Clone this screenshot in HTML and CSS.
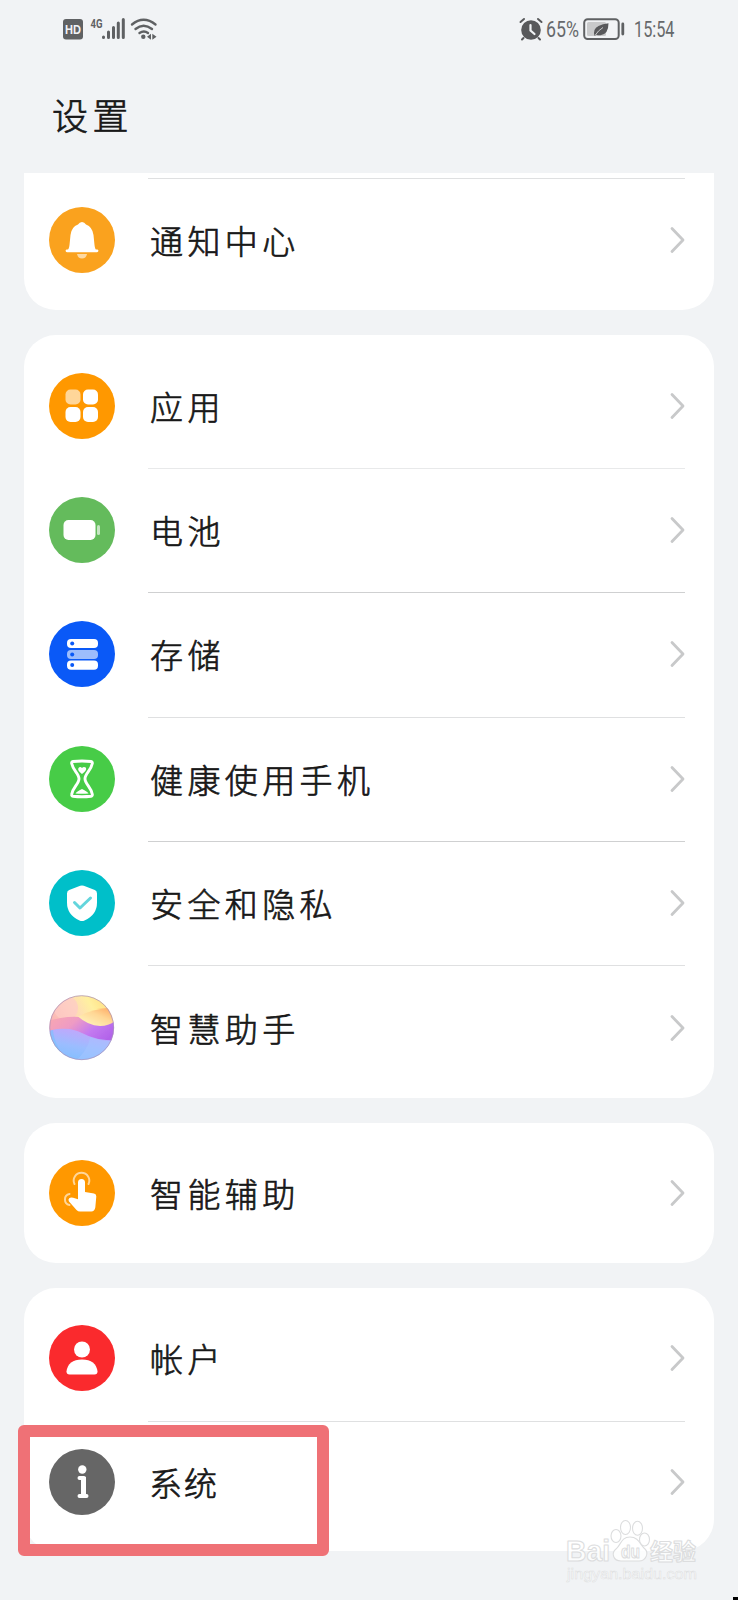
FILE: index.html
```html
<!DOCTYPE html>
<html lang="zh-CN">
<head>
<meta charset="utf-8">
<title>设置</title>
<link rel="stylesheet" href="styles.css">
</head>
<body>
<svg class="defs" aria-hidden="true">
  <symbol id="chev" viewBox="0 0 16 30"><path d="M2 3.500 13 15 2 26.500" fill="none" stroke="#c8c9ca" stroke-width="2.800" stroke-linecap="round" stroke-linejoin="round"/></symbol>
</svg>
<div class="phone">
  <div class="status">
    <svg class="status-left" viewBox="0 -6 100 36">
      <rect x="1" y="1" width="20" height="20.500" rx="3" fill="#5f6163"/>
      <text x="3" y="16" class="hd" textLength="16" lengthAdjust="spacingAndGlyphs">HD</text>
      <text x="28.500" y="9.500" class="g4" textLength="12" lengthAdjust="spacingAndGlyphs">4G</text>
      <path d="M41.500 19.500v-.5M46.500 19.500v-5.500M51.500 19.500v-10M56.300 19.500v-14.500M61.300 19.500v-18" stroke="#5f6163" stroke-width="3" stroke-linecap="round"/>
      <g fill="none" stroke="#5f6163" stroke-width="2.400" stroke-linecap="round"><path d="M70 6.500q11.500-9.500 23.500 0M73.500 11q8-6.500 16.500 0M77.500 15q4.500-3 8.500 0"/></g>
      <circle cx="81.300" cy="18.800" r="2.200" fill="#5f6163"/>
      <path d="M85 18.800l4-3v6zM90.300 15.800v6l4.200-3z" fill="#5f6163"/>
    </svg>
    <svg class="status-right" viewBox="0 -6 190 36">
      <circle cx="12" cy="12" r="9.800" fill="#58595b"/>
      <path d="M1.500 4l3.500-3M22.500 4 19 1M4.500 20l-1.500 1.500M19.500 20l1.500 1.500" stroke="#58595b" stroke-width="2" stroke-linecap="round"/>
      <path d="M11.500 7v5.500l4 3.500" fill="none" stroke="#f1f3f5" stroke-width="2.200" stroke-linecap="round"/>
      <text x="27" y="18.700" class="num" textLength="33" lengthAdjust="spacingAndGlyphs">65%</text>
      <rect x="65.200" y="1.200" width="34.500" height="19.800" rx="3.500" fill="none" stroke="#5f6163" stroke-width="2"/>
      <rect x="68" y="4" width="19" height="14" rx="1.500" fill="#c9cacb"/>
      <path d="M75.500 18q-2-7 4-10 4-2 10-2.800 0 11-8 12-2 .4-4-.4z" fill="#58595b"/>
      <path d="M76 17.500q3-5 8-8" stroke="#c9cacb" stroke-width="1" fill="none"/>
      <path d="M103.800 6v10" stroke="#5f6163" stroke-width="2.800" stroke-linecap="round"/>
      <text x="115" y="18.700" class="num" textLength="40.500" lengthAdjust="spacingAndGlyphs">15:54</text>
    </svg>
  </div>
  <h1 class="title">设置</h1>

  <main class="cards">
    <section class="card card-cut">
      <div class="row row-line"><svg class="icon" viewBox="0 0 66 66"><circle cx="33" cy="33" r="33" fill="#faa21e"/><path d="M17 45q3-2 3.500-7l1-10q.8-8 7.500-10.500 1.500-2.500 4-2.500t4 2.500q6.500 2.500 7.500 10.500l1 10q.5 5 3 7z" fill="#fff"/><path d="M18 43.800h30" stroke="#fff" stroke-width="2.800" stroke-linecap="round"/><path d="M28 47h10q-1 4.500-5 4.500t-5-4.500z" fill="#fdd9a2"/></svg><span class="label">通知中心</span><svg class="chev"><use href="#chev"/></svg></div>
    </section>

    <section class="card">
      <div class="row"><svg class="icon" viewBox="0 0 66 66"><circle cx="33" cy="33" r="33" fill="#ff9800"/><g fill="#fff"><rect x="16.500" y="16.500" width="15" height="15" rx="5" opacity=".6"/><rect x="34" y="16.500" width="15" height="15" rx="5"/><rect x="16.500" y="34" width="15" height="15" rx="5"/><rect x="34" y="34" width="15" height="15" rx="5"/></g></svg><span class="label">应用</span><svg class="chev"><use href="#chev"/></svg></div>
      <div class="row row-line light"><svg class="icon" viewBox="0 0 66 66"><circle cx="33" cy="33" r="33" fill="#64bb5c"/><rect x="14.500" y="23" width="32" height="20" rx="5" fill="#fff"/><rect x="48" y="28" width="3" height="10" rx="1.500" fill="#c5e5c2"/></svg><span class="label">电池</span><svg class="chev"><use href="#chev"/></svg></div>
      <div class="row row-line dark"><svg class="icon" viewBox="0 0 66 66"><circle cx="33" cy="33" r="33" fill="#0a59f7"/><rect x="18" y="18" width="31" height="9" rx="4" fill="#fff"/><rect x="18" y="29" width="31" height="9" rx="4" fill="#9dbdfc"/><rect x="18" y="39.500" width="31" height="9.300" rx="4" fill="#fff"/><g fill="#0a59f7"><circle cx="23.200" cy="22.600" r="2"/><circle cx="23.200" cy="33.400" r="2"/><circle cx="23.200" cy="44.100" r="2"/></g></svg><span class="label">存储</span><svg class="chev"><use href="#chev"/></svg></div>
      <div class="row row-line"><svg class="icon" viewBox="0 0 66 66"><circle cx="33" cy="33" r="33" fill="#47cc47"/><path d="M24 15.500q9-1 18 0c1.200.2 1.500 1 1.300 2-1.200 7-7.300 10-7.300 15.200s6 8.300 7.300 15.500c.2 1-.2 1.800-1.300 2q-9 1-18 0c-1.200-.2-1.500-1-1.300-2 1.200-7.200 7.300-10.300 7.300-15.500s-6-8.200-7.300-15.200c-.2-1 .1-1.800 1.300-2z" fill="none" stroke="#fff" stroke-width="2.900" stroke-linejoin="round"/><path d="M33 28q-5-3.500-3.500-6 1.600-1.800 3.500 0 1.800-2 4-.2 1 3-4 6.200zM26.500 47.500q1-2 6.500-4.500 5.500 2.500 6.500 4.500-6.500.6-13 0z" fill="#fff"/></svg><span class="label">健康使用手机</span><svg class="chev"><use href="#chev"/></svg></div>
      <div class="row row-line dark"><svg class="icon" viewBox="0 0 66 66"><circle cx="33" cy="33" r="33" fill="#00bfc9"/><path d="M31.200 15.800q1.800-.8 3.600 0l11 4.300q2.200.9 2.200 3.300v9q0 12.500-12.500 18-2.500 1-5 0-12.500-5.500-12.500-18v-9q0-2.400 2.200-3.300z" fill="#fff"/><path d="M25.500 32.500l5.500 5.500 10.500-10" fill="none" stroke="#63d5dc" stroke-width="3" stroke-linecap="round" stroke-linejoin="round"/></svg><span class="label">安全和隐私</span><svg class="chev"><use href="#chev"/></svg></div>
      <div class="row row-line"><svg class="icon" viewBox="0 0 66 66">
        <defs>
          <clipPath id="orb"><circle cx="32.700" cy="32.700" r="32.300"/></clipPath>
          <filter id="soft" x="-10%" y="-10%" width="120%" height="120%"><feGaussianBlur stdDeviation=".7"/></filter>
          <linearGradient id="top" x1=".1" y1=".5" x2=".8" y2=".1"><stop offset="0" stop-color="#fab0b4"/><stop offset=".45" stop-color="#fed9b8"/><stop offset=".75" stop-color="#fff0a0"/><stop offset="1" stop-color="#ffe083"/></linearGradient>
          <linearGradient id="amber" x1=".2" y1=".9" x2=".9" y2=".2"><stop offset="0" stop-color="#fff0b8"/><stop offset=".55" stop-color="#ffd795"/><stop offset="1" stop-color="#ffad66"/></linearGradient>
          <linearGradient id="mid" x1="0" y1="0" x2="1" y2=".4"><stop offset="0" stop-color="#fba9ae"/><stop offset=".4" stop-color="#ee9bc4"/><stop offset=".7" stop-color="#c47af0"/><stop offset="1" stop-color="#b264ea"/></linearGradient>
          <linearGradient id="low" x1=".75" y1=".1" x2=".4" y2="1"><stop offset="0" stop-color="#c5a5fb"/><stop offset=".5" stop-color="#9bbdff"/><stop offset="1" stop-color="#7cc0fe"/></linearGradient>
        </defs>
        <g clip-path="url(#orb)"><g filter="url(#soft)"><rect x="-4" y="-4" width="74" height="74" fill="url(#top)"/><circle cx="17" cy="13" r="12" fill="#fdcac8" opacity=".7"/><path d="M-4 27q18-6 34-5 16 3 42 0v26H-4z" fill="url(#mid)"/><path d="M29 21.500Q44 13 70 12v11q-9 8-19 8-12-.5-22-9.500z" fill="url(#amber)"/><path d="M-4 38q8-5 20-4.200 9 .2 17 4.200 14 8 37 7.500V70H-4z" fill="url(#low)"/><path d="M4 35q1 18 20 35H-4V37z" fill="#6ec4ff" opacity=".5"/><path d="M24 68q15-12 17-26 12 5 28 4v22z" fill="#a6c6ff" opacity=".5"/></g></g>
        <circle cx="32.700" cy="32.700" r="32" fill="none" stroke="#a890b8" stroke-width=".9" opacity=".8"/>
      </svg><span class="label">智慧助手</span><svg class="chev"><use href="#chev"/></svg></div>
    </section>

    <section class="card">
      <div class="row"><svg class="icon" viewBox="0 0 66 66"><circle cx="33" cy="33" r="33" fill="#ff9800"/><path d="M25.500 24a7.800 7.800 0 1 1 14 0M20.500 34a5.600 5.600 0 0 0 0 11" fill="none" stroke="#ffd699" stroke-width="2" stroke-linecap="round"/><path d="M29 22.500q0-3.500 3.500-3.500t3.500 3.500v9.500l9 1.500q2.500.5 2.300 3l-1 11q-.8 4-4 4H31q-2 0-3.500-1.500L20 41.500q-1.200-1.800.2-3.200 1.600-1.500 4-.5l4.800 1.500z" fill="#fff"/></svg><span class="label">智能辅助</span><svg class="chev"><use href="#chev"/></svg></div>
    </section>

    <section class="card">
      <div class="row"><svg class="icon" viewBox="0 0 66 66"><circle cx="33" cy="33" r="33" fill="#fa2a2d"/><circle cx="33" cy="24.500" r="8" fill="#fff"/><path d="M17.500 46.500Q19 34.500 33 34.500t15.500 12q0 3-3 3h-25q-3 0-3-3z" fill="#fff"/></svg><span class="label">帐户</span><svg class="chev"><use href="#chev"/></svg></div>
      <div class="row row-line row-marked"><svg class="icon" viewBox="0 0 66 66"><circle cx="33" cy="33" r="33" fill="#666"/><circle cx="33.300" cy="20.500" r="4.200" fill="#fff"/><path d="M30.500 29h4.500v18M30.500 47h7" fill="none" stroke="#fff" stroke-width="4" stroke-linecap="round" stroke-linejoin="round"/><path d="M32 28h5v18h-5z" fill="#fff"/></svg><span class="label label-tight">系统</span><svg class="chev"><use href="#chev"/></svg><div class="marker"></div></div>
    </section>
  </main>

  <svg class="watermark" viewBox="0 0 140 72">
    <g fill="#fff" fill-opacity=".8" stroke="#dcddde" stroke-width="1.100" stroke-linejoin="round">
      <text x="1" y="42" class="wm-big" textLength="44" lengthAdjust="spacingAndGlyphs">Bai</text>
      <ellipse cx="51" cy="17" rx="5" ry="6.500"/><ellipse cx="60.500" cy="8.500" rx="5" ry="7"/><ellipse cx="72.500" cy="9.300" rx="5" ry="7"/><ellipse cx="79.500" cy="20.500" rx="5" ry="6.500"/>
      <path d="M65 18c9 0 10 8 15 12 4 4 1 12-6 12H56c-8 0-10-8-5-12 5-4 5-12 14-12z"/>
      <text x="56" y="39" class="wm-du" textLength="19" lengthAdjust="spacingAndGlyphs">du</text>
      <text x="85" y="41" class="wm-cn" textLength="46" lengthAdjust="spacingAndGlyphs">经验</text>
    </g>
    <text x="2" y="60" class="wm-url" textLength="130" lengthAdjust="spacingAndGlyphs">jingyan.baidu.com</text>
  </svg>
  <div class="corner"></div>
</div>
</body>
</html>
```
FILE: styles.css
```css
* { box-sizing: border-box; }
body {
  margin: 0;
  background: #f1f3f5;
  font-family: "Noto Sans CJK SC", sans-serif;
  color: #181818;
}
.defs { display: block; width: 0; height: 0; }
.phone {
  position: relative;
  width: 738px;
  height: 1600px;
  overflow: hidden;
}
.status {
  display: flex;
  justify-content: space-between;
  height: 42px;
  padding: 12px 29px 0 62px;
}
.status-left { width: 100px; height: 36px; }
.status-right { width: 190px; height: 36px; }
.hd { font: 700 12px "Liberation Sans", sans-serif; fill: #f1f3f5; }
.g4 { font: 700 13px Roboto, sans-serif; fill: #5f6163; }
.num { font: 400 22px Roboto, sans-serif; fill: #66686a; }
.title {
  height: 131px;
  margin: 0;
  padding-left: 52px;
  font-size: 36px;
  font-weight: 300;
  line-height: 145px;
  letter-spacing: 4.5px;
  -webkit-text-stroke: .7px #181818;
}
.cards {
  display: flex;
  flex-direction: column;
  gap: 25px;
  padding: 0 24px;
}
.card {
  padding: 8px 0;
  border-radius: 32px;
  background: #fff;
}
.card-cut {
  padding-top: 5px;
  border-radius: 0 0 32px 32px;
}
.row {
  position: relative;
  display: flex;
  align-items: center;
  height: 124.4px;
  padding: 0 28px 0 25px;
}
.row-line::before {
  content: "";
  position: absolute;
  top: 0;
  left: 124px;
  right: 29px;
  height: 1px;
  background: #dfe0e1;
}
.row-line.light::before { background: #e8e9ea; }
.row-line.dark::before { background: #cfd0d1; }
.icon { width: 66px; height: 66px; flex: none; }
.label {
  flex: 1;
  margin-left: 35px;
  font-size: 33px;
  font-weight: 300;
  line-height: 48px;
  letter-spacing: 4.4px;
  -webkit-text-stroke: .7px #181818;
}
.label-tight { margin-left: 34px; letter-spacing: 2px; }
.chev { width: 16px; height: 30px; }
.row-marked { height: 122.5px; }
.marker {
  position: absolute;
  top: 4px;
  left: -6px;
  width: 311px;
  height: 131px;
  border: 12px solid #ef7176;
  border-radius: 6px;
}
.watermark {
  position: absolute;
  left: 565px;
  top: 1519px;
  width: 140px;
  height: 72px;
}
.wm-big { font: 700 30px "Liberation Sans", sans-serif; }
.wm-du { font: 700 18px "Liberation Sans", sans-serif; }
.wm-cn { font: 700 23px "Noto Sans CJK SC", sans-serif; }
.wm-url { font: 400 15px "Liberation Sans", sans-serif; fill: #fafbfb; stroke: #dddedf; stroke-width: .5px; }
.corner {
  position: absolute;
  right: 0;
  bottom: 0;
  width: 5px;
  height: 3px;
  background: #000;
}
```
